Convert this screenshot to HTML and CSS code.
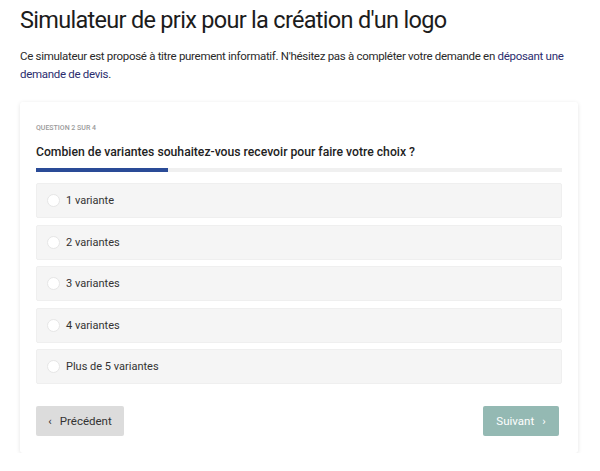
FILE: index.html
```html
<!DOCTYPE html>
<html lang="fr">
<head>
  <meta charset="UTF-8">
  <meta name="viewport" content="width=device-width, initial-scale=1">
  <title>Simulateur de prix pour la création d'un logo</title>
  <link rel="stylesheet" href="styles.css">
</head>
<body>

  <h1 class="page-title">Simulateur de prix pour la création d'un logo</h1>
  <p class="intro">
    Ce simulateur est proposé à titre purement informatif. N'hésitez pas à compléter votre demande en
    <a href="#">déposant une demande de devis</a>.
  </p>

  <div class="quiz-card">
    <div class="step-label">Question 2 sur 4</div>
    <div class="question">Combien de variantes souhaitez-vous recevoir pour faire votre choix ?</div>
    <div class="progress"><div class="progress-fill" style="width: 25%;"></div></div>

    <div class="options">
      <label class="option"><span class="radio"></span>1 variante</label>
      <label class="option"><span class="radio"></span>2 variantes</label>
      <label class="option"><span class="radio"></span>3 variantes</label>
      <label class="option"><span class="radio"></span>4 variantes</label>
      <label class="option"><span class="radio"></span>Plus de 5 variantes</label>
    </div>

    <div class="nav">
      <button class="btn btn-prev"><span class="chev">&lsaquo;</span>Précédent</button>
      <button class="btn btn-next">Suivant<span class="chev">&rsaquo;</span></button>
    </div>
  </div>

</body>
</html>
```

FILE: styles.css
```css
body {
  margin: 0;
  padding: 5px 22px 0 20px;
  background-color: #fff;
  font-family: Roboto, "Liberation Sans", sans-serif;
  color: #222;
}

.page-title {
  margin: 0;
  font-size: 23.5px;
  font-weight: 400;
  line-height: 30px;
  letter-spacing: -0.7px;
  color: #1c1c1c;
}

.intro {
  margin: 12px 0 0 0;
  font-size: 11.5px;
  line-height: 18px;
  letter-spacing: -0.3px;
  color: #2a2a2a;
}

.intro a {
  color: #2b2d6e;
  text-decoration: none;
}

.quiz-card {
  margin-top: 19px;
  padding: 21px 16px 17px 16px;
  background-color: #fff;
  border-radius: 3px;
  box-shadow: 0 1px 4px rgba(0, 0, 0, 0.11);
}

.step-label {
  font-size: 7px;
  line-height: 10px;
  font-weight: 500;
  text-transform: uppercase;
  color: #9a9a9a;
}

.question {
  margin-top: 10px;
  font-size: 12.2px;
  line-height: 18px;
  font-weight: 500;
  color: #222;
}

.progress {
  margin-top: 7px;
  height: 4px;
  background-color: #f0f0f0;
}

.progress-fill {
  height: 100%;
  background-color: #2a4b97;
}

.options {
  margin-top: 11px;
  display: flex;
  flex-direction: column;
  gap: 6.5px;
}

.option {
  display: flex;
  align-items: center;
  height: 35px;
  box-sizing: border-box;
  padding-left: 10px;
  background-color: #f5f5f5;
  border: 1px solid #efefef;
  border-radius: 2px;
  font-size: 11px;
  color: #333;
}

.radio {
  width: 13px;
  height: 13px;
  box-sizing: border-box;
  margin-right: 6px;
  border: 1px solid #e6e6e6;
  border-radius: 50%;
  background-color: #fff;
}

.nav {
  margin-top: 22px;
  display: flex;
  justify-content: space-between;
}

.btn {
  height: 30px;
  border: none;
  border-radius: 2px;
  font-family: Roboto, "Liberation Sans", sans-serif;
  font-size: 11.5px;
  cursor: pointer;
}

.btn-prev {
  width: 88px;
  background-color: #dcdcdc;
  color: #333;
}

.btn-prev .chev {
  margin-right: 8px;
}

.btn-next {
  width: 76px;
  margin-right: 3px;
  background-color: #94b9b3;
  color: #fff;
}

.btn-next .chev {
  margin-left: 8px;
}
```
